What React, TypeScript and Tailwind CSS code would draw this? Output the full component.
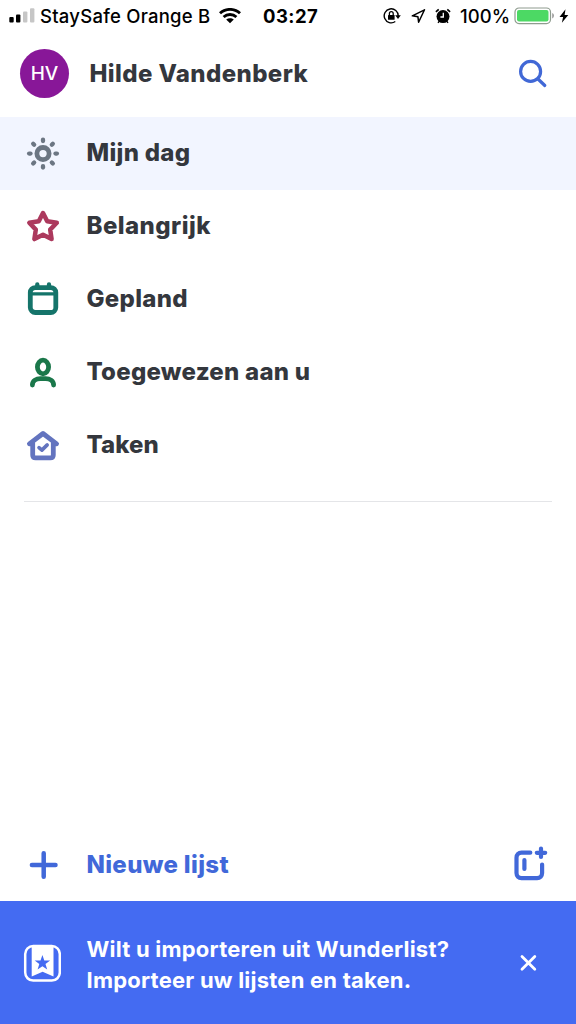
import type { ReactNode } from 'react';

interface MenuItem {
  label: string;
  icon: ReactNode;
  active?: boolean;
  tracking: string;
}

function RowIcon({ className = '', children }: { className?: string; children: ReactNode }) {
  return (
    <svg
      viewBox="0 0 37 37"
      className={`h-[37px] w-[37px] shrink-0 ${className}`}
      fill="none"
      stroke="currentColor"
      strokeWidth="4.8"
      strokeLinecap="round"
      strokeLinejoin="round"
    >
      {children}
    </svg>
  );
}

const rayAngles = [0, 45, 90, 135, 180, 225, 270, 315];

const menuItems: MenuItem[] = [
  {
    label: 'Mijn dag',
    active: true,
    tracking: 'tracking-[0.3px]',
    icon: (
      <RowIcon className="text-[#6c7683]">
        <circle cx="18" cy="18.6" r="6.1" />
        {rayAngles.map((a) => (
          <path key={a} d="M18 4.7v1.4" strokeWidth="4.3" transform={`rotate(${a} 18 18.6)`} />
        ))}
      </RowIcon>
    ),
  },
  {
    label: 'Belangrijk',
    tracking: 'tracking-[0.45px]',
    icon: (
      <RowIcon className="text-[#ac395d]">
        <path
          strokeWidth="4.5"
          d="M18 5 22.2 13.3 31.8 14.8 25.2 21.6 26.6 31.1 18 26.7 9.4 31.1 10.8 21.6 4.3 14.8 13.8 13.3Z"
        />
      </RowIcon>
    ),
  },
  {
    label: 'Gepland',
    tracking: 'tracking-[0.3px]',
    icon: (
      <RowIcon className="text-[#15746a]">
        <rect x="5.3" y="6.6" width="25.5" height="24.9" rx="5" />
        <path d="M6 12.8h24" strokeWidth="3.2" />
        <path d="M12.3 3.4v3M24 3.4v3" strokeWidth="4.3" />
      </RowIcon>
    ),
  },
  {
    label: 'Toegewezen aan u',
    tracking: 'tracking-[0.25px]',
    icon: (
      <RowIcon className="text-[#1a774a]">
        <ellipse cx="18" cy="13" rx="5.6" ry="6.8" />
        <path d="M7.4 31c0-4.4 4-6.3 8-6.3h5.2c4 0 8 1.9 8 6.3" />
      </RowIcon>
    ),
  },
  {
    label: 'Taken',
    tracking: 'tracking-[0.1px]',
    icon: (
      <RowIcon className="text-[#6374bf]">
        <path d="M4.4 16.8 18 6.5l13.6 10.3M7.7 16v12c0 1.8 1.2 2.9 3 2.9h14.6c1.8 0 3-1.1 3-2.9V16" />
        <path d="m14 20.6 2.9 2.5 5.3-5.2" strokeWidth="3.6" />
      </RowIcon>
    ),
  },
];

function StatusBar() {
  return (
    <div className="flex h-8 items-center text-[19px] font-medium text-black">
      <svg viewBox="0 0 26 16" className="ml-[9px] h-4 w-[26px] shrink-0">
        <rect x="0.3" y="9" width="4.4" height="5.6" rx="1" />
        <rect x="7" y="6.4" width="4.4" height="8.2" rx="1" />
        <rect x="14" y="3.5" width="4.4" height="11.1" rx="1" fill="#c6c6c6" />
        <rect x="21" y="0.2" width="4.4" height="14.4" rx="1" fill="#c6c6c6" />
      </svg>
      <span className="ml-[5px] w-[169px] shrink-0 pt-[2px] text-[18.5px] tracking-[0.25px] whitespace-nowrap">
        StaySafe Orange B
      </span>
      <svg viewBox="0 0 22 16" className="ml-[10px] h-4 w-[22px] shrink-0" fill="none" stroke="black" strokeWidth="2.9">
        <path d="M1 5.3c5.6-5.2 14.4-5.2 20 0" />
        <path d="M4.6 9c3.6-3.3 9.2-3.3 12.8 0" />
        <path d="M7.2 11.6c2.2-1.8 5.4-1.8 7.6 0L11 15.3Z" fill="black" stroke="none" />
      </svg>
      <span className="ml-[22px] w-14 shrink-0 pt-[2px] text-[18.5px] font-bold tracking-[0.45px] whitespace-nowrap">
        03:27
      </span>
      <svg viewBox="0 0 18 16" className="ml-16 h-4 w-[18px] shrink-0" fill="none" stroke="black" strokeWidth="1.4">
        <path d="M12.3 13.5a7 7 0 1 1 2.9-5.4" />
        <path d="M12.2 7.3h5.6l-2.8 3.6Z" fill="black" stroke="none" />
        <rect x="5" y="7" width="6.6" height="4.8" rx="0.6" fill="black" stroke="none" />
        <path d="M6.4 7.4V5.6a1.9 1.9 0 0 1 3.8 0v1.8" strokeWidth="1.3" />
      </svg>
      <svg viewBox="0 0 15 16" className="ml-[10px] h-4 w-[15px] shrink-0" fill="none" stroke="black" strokeWidth="1.5" strokeLinejoin="round">
        <path d="M13.5 1.8 1.3 7.8l5.6.9.7 5.5Z" />
      </svg>
      <svg viewBox="0 0 16 16" className="ml-[9px] h-4 w-4 shrink-0" fill="none" stroke="black">
        <circle cx="8" cy="8.6" r="6.5" fill="black" stroke="none" />
        <path d="M.9 3.9 3.7 1.4M15.1 3.9 12.3 1.4" strokeWidth="1.7" />
        <path d="m4 13.5-1 1.4M12 13.5l1 1.4" strokeWidth="1.3" />
        <path d="M8.3 4.8v4.2H5.4" stroke="white" strokeWidth="1.3" />
      </svg>
      <span className="ml-[9px] w-[51px] shrink-0 pt-[2px] text-[18.5px] tracking-[0.1px] whitespace-nowrap">100%</span>
      <svg viewBox="0 0 41 18" className="ml-[3px] h-[18px] w-[41px] shrink-0">
        <rect x="1" y="1" width="35.5" height="15.6" rx="4" fill="white" stroke="#8f9c8f" strokeWidth="1.2" />
        <rect x="3" y="3" width="31.5" height="11.6" rx="2" fill="#4cd964" />
        <path d="M38.3 6v5.4c2-.9 2-4.5 0-5.4Z" fill="#8a8a8a" />
      </svg>
      <svg viewBox="0 0 10 14" className="ml-1 h-[14px] w-[10px] shrink-0">
        <path d="M6.5.3.5 8h3.6L2.9 13.8 9.3 5.9H5.6Z" />
      </svg>
    </div>
  );
}

function Header() {
  return (
    <header className="flex h-[85px] items-center pr-7 pb-[2px] pl-5">
      <div className="flex h-[49px] w-[49px] items-center justify-center rounded-full bg-[#881798] pt-[2px] text-[19px] font-medium text-white">
        HV
      </div>
      <h1 className="ml-[20.5px] text-2xl font-extrabold tracking-[0.4px] whitespace-nowrap">Hilde Vandenberk</h1>
      <svg
        viewBox="0 0 30 30"
        className="ml-auto h-[30px] w-[30px] text-[#4168d6]"
        fill="none"
        stroke="currentColor"
        strokeWidth="3.2"
        strokeLinecap="round"
      >
        <circle cx="12.6" cy="12.4" r="10" />
        <path d="m20 20 6.8 6.5" />
      </svg>
    </header>
  );
}

function ImportBanner() {
  return (
    <div className="flex h-[123px] items-center bg-[#446bf2] pr-[39px] pl-[23px] text-white">
      <svg viewBox="0 0 38 38" className="h-[38px] w-[38px] shrink-0">
        <rect x="2.2" y="2" width="34.6" height="34.6" rx="8" fill="none" stroke="currentColor" strokeWidth="2.5" />
        <path d="M8.7 2h21.8v30.4l-10.9-4.6-10.9 4.6Z" fill="currentColor" />
        <path
          d="m19.4 11 1.9 5.5h5.8l-4.6 3.5 1.7 5.6-4.8-3.4-4.8 3.4 1.7-5.6-4.6-3.5h5.8Z"
          fill="#446bf2"
        />
      </svg>
      <p className="ml-[25.5px] pt-[4px] text-[22px] leading-[31px] font-bold tracking-[0.22px] whitespace-nowrap">
        Wilt u importeren uit Wunderlist?
        <br />
        Importeer uw lijsten en taken.
      </p>
      <svg
        viewBox="0 0 18 18"
        className="ml-auto h-[18px] w-[18px] shrink-0"
        fill="none"
        stroke="currentColor"
        strokeWidth="2.8"
        strokeLinecap="round"
      >
        <path d="m3 2.5 12.8 12.8M15.8 2.5 3 15.3" />
      </svg>
    </div>
  );
}

export default function App() {
  return (
    <div className="flex h-[1024px] w-[576px] flex-col overflow-hidden bg-white font-['Inter','Liberation_Sans',sans-serif] text-[#34373d]">
      <StatusBar />
      <Header />
      <nav>
        {menuItems.map((item) => (
          <div key={item.label} className={`flex h-[73px] items-center pl-[25px] ${item.active ? 'bg-[#f2f5ff]' : ''}`}>
            {item.icon}
            <span className={`ml-[24.5px] pb-[2px] text-2xl font-extrabold whitespace-nowrap ${item.tracking}`}>
              {item.label}
            </span>
          </div>
        ))}
      </nav>
      <hr className="mx-6 mt-[19px] border-[#e4e5e8]" />
      <div className="mt-auto flex h-[73px] items-center pr-[27px] pl-[25px] text-[#4168d9]">
        <RowIcon>
          <path d="M6.9 19h23.6M18.7 7.2v23.6" strokeWidth="4.5" />
        </RowIcon>
        <span className="ml-[24.5px] text-2xl font-extrabold tracking-[0.35px] whitespace-nowrap">Nieuwe lijst</span>
        <svg
          viewBox="0 0 37 37"
          className="ml-auto h-[37px] w-[37px]"
          fill="none"
          stroke="currentColor"
          strokeWidth="4.2"
          strokeLinecap="round"
          strokeLinejoin="round"
        >
          <path d="M18.3 6.7H9.5c-3 0-5 2-5 5v15.4c0 3 2 5 5 5h15.6c3 0 5-2 5-5V18.6" />
          <path d="M12.4 14v9" />
          <path d="M29 2.6v8.4M24.8 6.8h8.4" />
        </svg>
      </div>
      <ImportBanner />
    </div>
  );
}
